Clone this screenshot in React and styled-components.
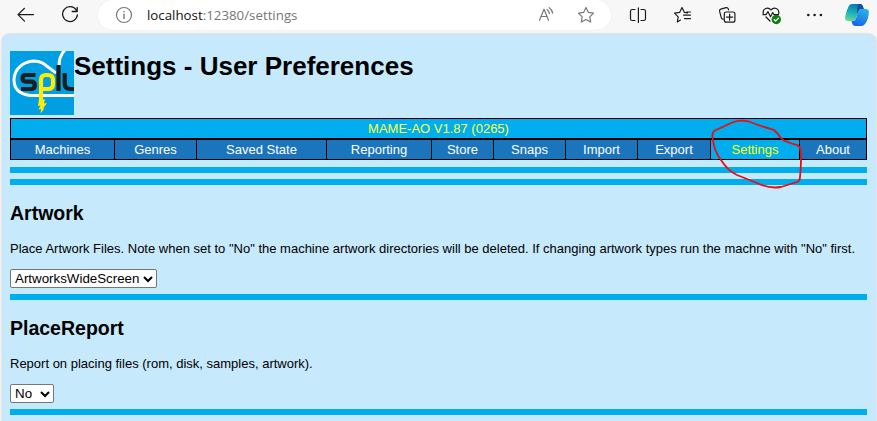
import React from "react";
import styled, { createGlobalStyle } from "styled-components";

const GlobalStyle = createGlobalStyle`
  * { box-sizing: border-box; }
  body { margin: 0; background: #f7f7f7; overflow: hidden; }
`;

const Window = styled.div`
  position: relative;
  width: 877px;
  height: 421px;
  overflow: hidden;
  background: #f7f7f7;
  font-family: "Liberation Sans", Arial, sans-serif;
`;

const Toolbar = styled.header`
  display: flex;
  height: 34px;
  padding-left: 13px;
`;

const ToolIcon = styled.svg`
  display: block;
  flex: none;
  width: ${(p) => p.$w || 24}px;
  height: 30px;
  margin-left: ${(p) => p.$gap || 0}px;
  fill: none;
  stroke: ${(p) => p.$color || "#1b1b1b"};
  stroke-width: 1.2;
  stroke-linecap: round;
  stroke-linejoin: round;
`;

const AddressBar = styled.div`
  display: flex;
  flex: none;
  width: 513px;
  height: 30px;
  margin-left: 16px;
  padding-left: 14px;
  border-radius: 15px;
  background: #fff;
  box-shadow: 0 0 2px rgba(0, 0, 0, 0.06);
`;

const Url = styled.div`
  width: 387px;
  margin-left: 11px;
  color: #767676;
  font: 13.3px/30px "Open Sans", "Noto Sans", sans-serif;
  white-space: nowrap;
`;

const Host = styled.span`
  color: #111;
`;

const Page = styled.main`
  width: 874px;
  height: 400px;
  margin-left: 2px;
  padding: 17px 8px 0;
  border-radius: 8px;
  background: #c6e9fb;
  box-shadow: 0 0 2px rgba(0, 0, 0, 0.25);
  color: #000;
`;

const Masthead = styled.div`
  display: flex;
  height: 67px;
`;

const Logo = styled.svg`
  display: block;
  flex: none;
  width: 64px;
  height: 64px;
`;

const Title = styled.h1`
  margin: 0;
  font-size: 26px;
  line-height: 30px;
  white-space: nowrap;
`;

const Version = styled.div`
  width: 857px;
  height: 21px;
  border: 1px solid #000;
  background: #00adef;
  color: #ffff3c;
  font-size: 13px;
  line-height: 19px;
  text-align: center;
`;

const Nav = styled.nav`
  display: grid;
  grid-template-columns: 103px 81px 129px 104px 61px 71px 71px 72px 88px 66px;
  gap: 1px;
  width: 857px;
  height: 21px;
  padding: 1px;
  background: #000;
`;

const NavLink = styled.a`
  background: ${(p) => (p.$active ? "#00adef" : "#1b75bc")};
  color: ${(p) => (p.$active ? "#ffff00" : "#fff")};
  font-size: 13px;
  line-height: 19px;
  text-align: center;
`;

const Rule = styled.hr`
  width: 857px;
  height: 6px;
  margin: ${(p) => p.$top}px 0 0;
  border: 0;
  background: #00adef;
`;

const Heading = styled.h2`
  height: 24px;
  margin: 16px 0 0;
  font-size: 19.5px;
  line-height: 24px;
`;

const Description = styled.p`
  height: 16px;
  margin: 16px 0 0;
  font-size: 13px;
  line-height: 16px;
  white-space: nowrap;
`;

const SelectBox = styled.div`
  position: relative;
  width: ${(p) => p.$w}px;
  height: 19px;
  margin-top: 12px;
`;

const Select = styled.select`
  display: block;
  width: 100%;
  height: 100%;
  padding: 0 0 0 4px;
  appearance: none;
  border: 1px solid #767676;
  border-radius: 2px;
  background: #fff;
  color: #000;
  font: 13.33px/17px "Liberation Sans", Arial, sans-serif;
`;

const Chevron = styled.svg`
  position: absolute;
  right: 4px;
  top: 6px;
  width: 10px;
  height: 8px;
  pointer-events: none;
  fill: none;
  stroke: #000;
  stroke-width: 2;
`;

const Annotation = styled.svg`
  position: absolute;
  left: 700px;
  top: 110px;
  width: 110px;
  height: 85px;
  pointer-events: none;
  fill: none;
  stroke: #f00c0c;
  stroke-width: 1.8;
  stroke-linejoin: round;
  stroke-linecap: round;
`;

const links = ["Machines", "Genres", "Saved State", "Reporting", "Store", "Snaps", "Import", "Export", "Settings", "About"];

const star = "M12 7.6 L14.4 12.4 L19.5 13.1 L15.8 16.8 L16.7 22 L12 19.5 L7.3 22 L8.2 16.8 L4.5 13.1 L9.6 12.4 Z";

function BrowserToolbar() {
  return (
    <Toolbar>
      <ToolIcon viewBox="0 0 24 30"><path d="M20.5 14.6H5M11.5 8.3 5 14.6l6.5 6.5" /></ToolIcon>
      <ToolIcon $gap={21} viewBox="0 0 24 30">
        <path d="M18.2 10A7.4 7.4 0 1 0 19.4 14.8M19.2 7.5v4h-5" strokeWidth="1.3" />
      </ToolIcon>
      <AddressBar>
        <ToolIcon $color="#777" viewBox="0 0 24 30">
          <circle cx="12" cy="15" r="7.5" />
          <path d="M12 14.3v4.3M12 11.4v.3" strokeWidth="1.4" />
        </ToolIcon>
        <Url><Host>localhost</Host>:12380/settings</Url>
        <ToolIcon $color="#777" viewBox="0 0 24 30">
          <path d="M5.5 20.2 10 9.2l4.5 11M7 16.5h6M13 9.6q2 1.3 2.4 4M15.2 7.7q3 2 3.5 5.5" />
        </ToolIcon>
        <ToolIcon $gap={16} $color="#777" viewBox="0 0 24 30"><path d={star} /></ToolIcon>
      </AddressBar>
      <ToolIcon $gap={15} viewBox="0 0 24 30">
        <path d="M9 9.5H6.3q-1.8 0-1.8 1.8v7.4q0 1.8 1.8 1.8H9M15 9.5h2.7q1.8 0 1.8 1.8v7.4q0 1.8-1.8 1.8H15M12.4 7.8v14.7" />
      </ToolIcon>
      <ToolIcon $gap={21} viewBox="0 0 24 30">
        <path d="M9.5 20.1 6.3 22l.9-5.2-3.7-3.7 5.1-.7L11 7.6l2.3 4.7 3.2.5M14 15.1h5.500M12.500 15.100h1M13.500 18.600h6M15.500 12h4" />
      </ToolIcon>
      <ToolIcon $gap={20} viewBox="0 0 24 30">
        <path d="M8 19.2q-1.3-.2-1.7-1.5L4.6 11.4q-.4-1.8 1.2-2.3l5.2-1.5q1.7-.4 2.3 1.3l.3 1M11.3 12h6.6q2 0 2 2v6.2q0 2-2 2h-6.6q-2 0-2-2V14q0-2 2-2M14.6 14v6.2M11.5 17.1h6.2" />
      </ToolIcon>
      <ToolIcon $gap={20} viewBox="0 0 24 30">
        <path d="M4.3 13.800C3.1 8.7 9 6.2 12 10c3-3.8 8.9-1.3 7.6 3.8M7 17l4 4M4 14.7h3l2-3 2.500 5 2.200-4.200 1.400 2.200h4.300" />
        <circle cx="17.3" cy="19.5" r="4.7" fill="#107c10" stroke="none" />
        <path d="m15.2 19.5 1.5 1.6 2.8-3" stroke="#fff" />
      </ToolIcon>
      <ToolIcon $gap={20} viewBox="0 0 24 30">
        <g fill="#1b1b1b" stroke="none"><circle cx="5.3" cy="15" r="1.3" /><circle cx="11.6" cy="15" r="1.3" /><circle cx="17.9" cy="15" r="1.3" /></g>
      </ToolIcon>
      <ToolIcon $w={26} $gap={17} viewBox="0 0 26 30">
        <defs>
          <linearGradient id="teal" x1="0.5" y1="0" x2="0.2" y2="1"><stop stopColor="#087ba8" /><stop offset=".5" stopColor="#18b0bc" /><stop offset="1" stopColor="#67dc91" /></linearGradient>
          <linearGradient id="blue" x1="0.8" y1="0" x2="0.4" y2="1"><stop stopColor="#20b6ef" /><stop offset=".5" stopColor="#298ce8" /><stop offset="1" stopColor="#1565f0" /></linearGradient>
        </defs>
        <g stroke="none">
          <path d="M8 4h8.2q1.8 0 2.5 2l1 3h-2.2q-2.4 0-3.2 2.2l-2.6 7.8Q10.5 21 8 21H4Q.8 21 1.1 17.2 2 11 4.7 6.2 5.9 4 8 4" fill="url(#teal)" />
          <path d="M15.5 4h.8q1.8 0 2.5 2l1 3h-2.3q-2.2 0-3 2L13 14.5 13.3 7Q13.5 4 15.5 4" fill="#174fa5" />
          <path d="M17.5 9h4q3.7 0 3.4 3.6-.5 7-3.7 11.2-1.6 2.2-3.8 2.2h-6q-2.2 0-3-2l-.9-3H9q2 0 2.8-2.1l2.5-7.6Q15.2 9 17.5 9" fill="url(#blue)" />
        </g>
      </ToolIcon>
    </Toolbar>
  );
}

function SpludLogo() {
  return (
    <Logo viewBox="0 0 64 64">
      <rect width="64" height="64" fill="#009fe3" />
      <path d="M64 44.500H20C9 43 4 37 4 29 4 18 13 10.500 24 10 33 10 36 15 46 22M49 15Q49 5 55-1" fill="none" stroke="#fff" strokeWidth="3" />
      <g fill="none" strokeWidth="4.2">
        <path d="M25.500 24H16q-3.500 0-3.500 3.300t3.500 3.300h5q3.800 0 3.800 3.700t-3.800 3.700H11" stroke="#1d1d1b" />
        <path d="M31 50V29q0-5 5-5h2q5 0 5 5v4.500q0 4.500-5 4.500H33" stroke="#ffed00" />
        <path d="M48.500 14v26M54.700 22v10.500q0 5.500 5.500 5.500H64" stroke="#1d1d1b" />
      </g>
      <path d="M29 48.500h6l-1 4 3-.5-4 5.500 1.500-.3L30.500 62.500l.5-4.500-2.500.5 2-4-2.500.5Z" fill="#ffed00" />
    </Logo>
  );
}

function Dropdown({ value, width }) {
  return (
    <SelectBox $w={width}>
      <Select defaultValue={value} aria-label={value}><option>{value}</option></Select>
      <Chevron viewBox="0 0 10 8"><path d="m1 2 4 4 4-4" /></Chevron>
    </SelectBox>
  );
}

export default function App() {
  return (
    <Window>
      <GlobalStyle />
      <BrowserToolbar />
      <Page>
        <Masthead><SpludLogo /><Title>Settings - User Preferences</Title></Masthead>
        <Version>MAME-AO V1.87 (0265)</Version>
        <Nav>{links.map((name) => <NavLink key={name} $active={name === "Settings"}>{name}</NavLink>)}</Nav>
        <Rule $top={7} />
        <Rule $top={6} />
        <Heading>Artwork</Heading>
        <Description>Place Artwork Files. Note when set to "No" the machine artwork directories will be deleted. If changing artwork types run the machne with "No" first.</Description>
        <Dropdown value="ArtworksWideScreen" width={147} />
        <Rule $top={6} />
        <Heading>PlaceReport</Heading>
        <Description>Report on placing files (rom, disk, samples, artwork).</Description>
        <Dropdown value="No" width={44} />
        <Rule $top={6} />
      </Page>
      <Annotation viewBox="700 110 110 85">
        <path d="M774 130 Q757 125 749 121.500 Q739 119 731 123 L715 130.500 Q712 132 712.500 137 Q714 151 721 160 Q728 171 737 175 L757 183 Q769 189 781 187 L797 182 Q800 181 800 177 Q802 158 800 148 Q799 145 793 144 L784 140.500 Q780 138 778 134 L774 130" />
      </Annotation>
    </Window>
  );
}
